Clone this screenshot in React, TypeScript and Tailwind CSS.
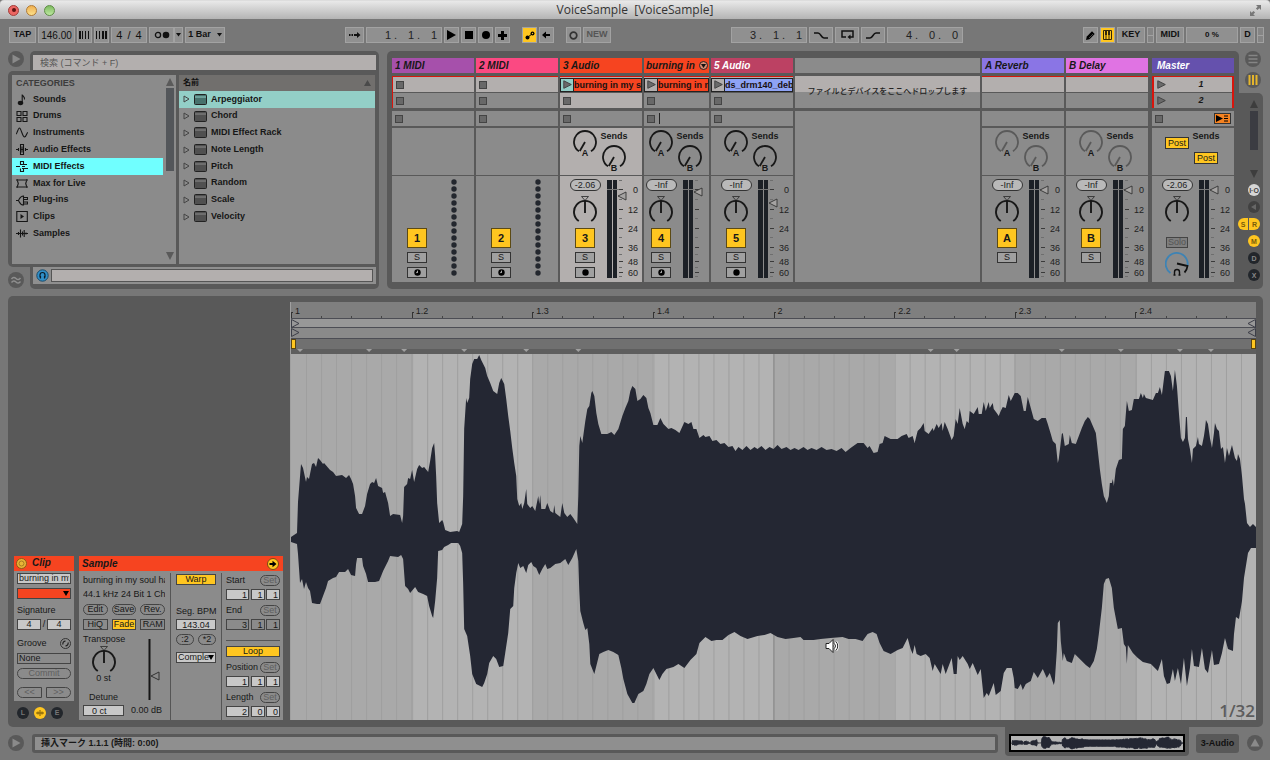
import React from "react";
import clsx from "clsx";

const waveTop =
  "291,536 297,532 298,501 301,463 303,467 306,481 307,476 309,478 312,463 314,462 316,466 318,457 320,459 323,463 324,462 330,469 333,471 336,475 342,474 346,477 349,474 351,478 353,483 355,495 356,507 359,513 362,513 365,505 367,493 370,483 372,481 374,482 376,477 378,485 382,487 383,492 385,491 388,502 390,515 393,513 400,514 402,522 403,515 404,486 407,483 408,477 410,478 412,469 414,481 417,468 419,464 422,467 424,466 428,471 430,460 432,447 434,442 435,455 436,475 437,502 439,522 442,519 443,521 445,529 450,531 457,530 459,531 462,523 463,495 464,428 466,397 467,402 469,397 470,378 472,363 474,358 477,358 479,354 481,359 485,367 487,375 490,382 493,390 497,393 499,382 501,377 504,383 506,398 508,415 510,430 512,447 514,462 516,475 517,498 519,505 521,502 522,508 524,502 526,488 527,503 530,507 532,505 535,510 538,495 539,503 540,494 541,508 545,508 547,502 550,510 553,512 554,504 555,512 560,516 562,502 564,512 567,516 570,513 573,517 577,523 578,495 579,445 580,435 582,442 585,420 587,408 589,405 591,392 592,390 594,395 596,412 598,423 601,433 607,433 611,431 614,434 618,428 622,415 625,407 628,400 630,390 632,385 635,388 637,400 640,398 643,394 646,397 648,407 650,412 653,424 657,424 660,417 663,423 668,428 671,427 675,429 679,432 684,421 688,423 691,421 693,428 696,428 699,437 703,434 705,436 709,435 712,440 716,439 720,443 724,442 728,446 732,445 735,450 738,446 742,449 746,445 750,449 754,446 757,448 761,445 765,449 769,446 773,448 777,444 781,448 786,446 790,449 794,447 798,449 803,446 807,449 811,447 816,449 821,446 826,449 831,448 836,450 841,447 845,451 850,447 857,442 863,442 867,447 869,445 873,452 877,451 879,443 882,442 884,435 890,438 897,438 901,435 906,433 908,437 912,435 914,442 917,430 920,427 923,422 924,430 928,433 932,427 933,430 936,423 938,427 941,422 942,430 944,421 947,428 951,439 953,435 955,418 957,423 959,407 962,423 964,428 966,420 968,422 969,410 973,413 977,406 978,413 981,413 983,401 985,410 988,401 989,407 992,402 993,408 996,412 998,415 1000,410 1002,406 1005,407 1008,394 1010,400 1014,392 1017,392 1020,395 1023,410 1025,410 1027,396 1030,407 1033,418 1037,420 1041,417 1045,417 1047,423 1050,433 1052,440 1055,443 1057,462 1058,458 1061,433 1062,432 1064,445 1068,443 1069,434 1071,442 1075,443 1078,435 1081,427 1084,420 1087,416 1089,418 1092,425 1095,432 1097,450 1099,468 1101,483 1103,495 1106,502 1108,495 1109,482 1111,482 1112,478 1113,485 1115,468 1118,459 1121,458 1122,428 1124,425 1126,400 1128,410 1131,409 1133,398 1138,398 1140,392 1142,397 1143,393 1145,397 1152,399 1155,392 1157,392 1159,386 1161,394 1163,378 1164,370 1168,370 1170,375 1172,390 1174,369 1176,385 1178,412 1180,437 1182,441 1184,437 1185,416 1186,416 1187,438 1189,448 1191,462 1192,448 1195,445 1197,436 1198,443 1201,445 1203,435 1204,428 1205,419 1207,423 1209,437 1211,447 1213,432 1214,422 1216,428 1218,430 1220,448 1222,446 1224,462 1226,447 1228,455 1231,444 1234,457 1236,460 1237,453 1239,458 1241,475 1243,498 1244,503 1246,522 1249,526 1252,523 1255,526";

const waveBottom =
  "291,541 297,543 298,553 300,582 302,578 304,588 306,581 308,587 310,590 312,602 317,603 320,603 323,595 326,587 328,580 333,577 336,576 339,571 345,571 348,568 351,574 355,575 356,563 357,557 362,557 363,565 366,573 368,581 375,581 379,580 383,570 388,560 390,555 398,556 401,554 403,558 405,585 408,588 410,592 415,586 418,591 423,593 427,595 429,605 432,615 433,617 435,600 437,577 438,550 442,549 444,546 448,544 451,542 458,542 460,545 462,552 463,583 464,628 467,635 470,655 472,673 476,683 482,686 484,682 487,673 489,662 493,655 496,658 499,666 503,665 505,652 508,632 510,608 513,605 514,587 516,572 518,562 520,567 523,565 526,572 528,564 531,561 533,565 536,567 539,574 542,568 545,563 547,568 550,567 555,563 560,562 565,558 568,564 572,557 576,548 578,560 579,590 580,610 583,622 585,629 587,627 589,643 590,663 594,673 596,665 599,653 603,651 608,649 613,651 618,654 621,667 623,678 627,693 632,702 634,702 638,693 643,690 646,683 649,673 653,667 656,673 659,679 662,673 666,668 673,666 678,663 684,667 690,659 696,653 699,642 705,636 711,640 716,639 722,639 728,634 734,631 740,635 747,638 757,635 764,634 770,632 777,636 785,638 793,637 800,636 803,639 813,639 820,638 830,637 842,636 848,638 855,638 862,640 867,633 872,631 876,633 879,642 883,650 890,653 897,649 902,647 907,637 910,648 912,653 914,644 916,653 920,655 925,653 929,657 932,670 934,663 940,673 942,663 945,673 948,665 951,657 953,673 956,673 957,655 959,659 962,655 967,663 969,668 972,662 977,674 980,668 983,697 986,692 988,695 993,682 995,694 1000,690 1003,672 1006,667 1011,667 1013,677 1014,687 1017,688 1020,683 1022,689 1025,683 1030,680 1033,671 1037,677 1042,668 1046,677 1049,672 1053,684 1054,680 1056,650 1057,622 1059,619 1060,640 1062,660 1063,652 1066,660 1071,662 1074,653 1080,659 1085,664 1089,667 1093,660 1096,648 1098,633 1101,607 1103,583 1105,578 1108,577 1111,587 1113,607 1117,628 1121,627 1123,643 1125,646 1126,663 1127,644 1132,652 1137,657 1142,661 1150,663 1157,670 1161,658 1163,675 1166,683 1169,682 1172,668 1174,680 1177,667 1180,683 1183,657 1186,685 1189,667 1191,648 1193,665 1198,666 1201,647 1204,668 1207,672 1211,649 1213,664 1218,663 1221,652 1224,637 1227,648 1232,650 1233,633 1235,616 1238,618 1241,600 1243,577 1247,552 1250,547 1255,547";

const wavePoints = `${waveTop} ${waveBottom.split(" ").reverse().join(" ")}`;

const categories = [
  "Sounds",
  "Drums",
  "Instruments",
  "Audio Effects",
  "MIDI Effects",
  "Max for Live",
  "Plug-ins",
  "Clips",
  "Samples",
];

const categoryIcons: Record<string, React.ReactNode> = {
  Sounds: (
    <>
      <ellipse cx="4.5" cy="10" rx="2.2" ry="1.6" fill="currentColor" />
      <path d="M6.2 10V1.5c.3 1.8 2.8 2 2.3 5" />
    </>
  ),
  Drums: <path d="M1 1.5h4v4H1zM7 1.5h4v4H7zM1 7.5h4v4H1zM7 7.5h4v4H7z" />,
  Instruments: <path d="M0 8c1 0 2-6 3.5-6S6.5 11 8.5 11 10.5 6.5 12 6.5" />,
  "Audio Effects": (
    <path d="M0 6.5h3M9 6.5h3M2.5 5v3M4.5 1.5h3v10h-3zM6 3.5v6M9.5 5v3M4 6.5h4" />
  ),
  "MIDI Effects": (
    <path d="M0 6.5h4M4.5 4.5v-3h3v3M4.5 8.5v3h3v-3M4 4.5h7M6 6.5h3M6 8.5h6" />
  ),
  "Max for Live": (
    <path d="M1 2v2M11 2v2M1 9v2M11 9v2M1 3h10M1 10h10M1.5 4l.8 2.5-.8 2.5M10.5 4l-.8 2.5.8 2.5" />
  ),
  "Plug-ins": (
    <path d="M0 6.5h2.5M7.5 2C4 2 3.5 5 2.5 6.5 3.5 8 4 11 7.5 11zM8 3.5h3.5v2H8M8 8h3.5v2H8" />
  ),
  Clips: (
    <>
      <path d="M.8 1.5h10.5v10H.8z" />
      <path d="M4.5 4v5l3.5-2.5z" fill="currentColor" stroke="none" />
    </>
  ),
  Samples: (
    <path d="M0 6.5h12M2.5 5v3M4.5 2.5v8M6.5 4.5v4M8.2 3v7M10 5.5v2" />
  ),
};

const devices = [
  "Arpeggiator",
  "Chord",
  "MIDI Effect Rack",
  "Note Length",
  "Pitch",
  "Random",
  "Scale",
  "Velocity",
];

const beats = ["1", "1.2", "1.3", "1.4", "2", "2.2", "2.3", "2.4"];
const warpMarks = [300, 369, 404, 464, 526, 578, 930, 956, 1061, 1120, 1179, 1210];

const scale = [
  { db: "0", y: 13 },
  { db: "12", y: 33 },
  { db: "24", y: 52 },
  { db: "36", y: 71 },
  { db: "48", y: 85 },
  { db: "60", y: 96 },
];

/* ---------- Top bar ---------- */

type BarButtonProps = {
  className?: string;
  label?: string;
  active?: boolean;
  children?: React.ReactNode;
};

const BarButton = ({ className, label, active, children }: BarButtonProps) => (
  <button
    type="button"
    aria-label={label}
    className={clsx(
      "flex h-4 shrink-0 items-center justify-center border border-[#a2a2a2]",
      active ? "bg-[#ffc620]" : "bg-[#909090]",
      className
    )}
  >
    {children}
  </button>
);

const Counter = ({ parts }: { parts: string[] }) => (
  <div className="flex h-4 w-[76px] items-center justify-end border border-[#a2a2a2] bg-[#909090] pr-[4px] text-[11px] font-normal text-[#222]">
    {parts.map((part, i) => (
      <span key={i} className={i < 2 ? "w-[23px]" : ""}>
        {i < 2 ? `${part} .` : part}
      </span>
    ))}
  </div>
);

const SplitBox = () => (
  <div className="flex h-4 w-[7px] flex-col border border-[#a2a2a2] bg-[#858585]">
    <div className="flex-1 border-b border-[#a2a2a2]" />
    <div className="flex-1" />
  </div>
);

const Bars = ({ widths }: { widths: number[] }) => (
  <svg width="11" height="8" fill="#111">
    {widths.map((w, i) => (
      <rect key={i} x={i * 3} y="0" width={w} height="8" />
    ))}
  </svg>
);

const TitleBar = () => (
  <header className="flex h-[19px] items-center rounded-t-[4px] border-t border-[#ddd] bg-linear-to-b from-[#e9e9e9] to-[#b4b4b4] px-2">
    <div className="flex flex-1 items-center gap-[7px]">
      <button type="button" aria-label="Close" className="flex size-[11px] items-center justify-center rounded-full border border-[#a3403c] bg-[#ec6662]">
        <span className="size-1 rounded-full bg-[#5c1512]" />
      </button>
      <button type="button" aria-label="Minimize" className="size-[11px] rounded-full border border-[#b17a33] bg-linear-to-b from-[#f0b050] to-[#fbe08a]" />
      <button type="button" aria-label="Zoom" className="size-[11px] rounded-full border border-[#5e8d45] bg-linear-to-b from-[#7fbc60] to-[#bce7a0]" />
    </div>
    <h1 className="whitespace-pre font-['Open_Sans',sans-serif] text-[12px] leading-4 text-[#333]">
      VoiceSample  [VoiceSample]
    </h1>
    <div className="flex flex-1 justify-end">
      <svg width="13" height="13" fill="#777">
        <path d="M7 1h5v5l-1.700-1.700-1.800 1.800-1.600-1.600 1.800-1.800zM1 7l1.700 1.700 1.800-1.800 1.600 1.600-1.800 1.800L6 12H1z" />
      </svg>
    </div>
  </header>
);

const Toolbar = () => (
  <div className="flex h-8 items-center justify-between pr-[6px] pl-[9px] text-[9px] font-bold text-[#111]">
    <div className="flex gap-[2px]">
      <BarButton className="w-[27px]">TAP</BarButton>
      <input
        aria-label="Tempo"
        defaultValue="146.00"
        className="h-4 w-[37px] border border-[#a2a2a2] bg-[#909090] text-center text-[10px] font-normal text-[#111]"
      />
      <BarButton className="w-[15px]" label="Nudge down">
        <Bars widths={[2, 1, 1, 1]} />
      </BarButton>
      <BarButton className="w-[15px]" label="Nudge up">
        <Bars widths={[1, 1, 2, 2]} />
      </BarButton>
      <BarButton className="w-[36px] gap-[5px] text-[11px] font-normal">
        <span>4</span>
        <span>/</span>
        <span>4</span>
      </BarButton>
      <div className="flex">
        <BarButton className="w-[25px]" label="Metronome">
          <svg width="16" height="8">
            <circle cx="4" cy="4" r="2.6" fill="none" stroke="#111" strokeWidth="1.3" />
            <circle cx="12" cy="4" r="3.3" fill="#111" />
          </svg>
        </BarButton>
        <BarButton className="w-[9px]" label="Metronome settings">
          <svg width="5" height="4">
            <path d="M0 0h5L2.500 3.500z" fill="#111" />
          </svg>
        </BarButton>
      </div>
      <BarButton className="w-[40px] gap-[6px] whitespace-nowrap">
        1 Bar
        <svg width="5" height="4">
          <path d="M0 0h5L2.500 3.500z" fill="#111" />
        </svg>
      </BarButton>
    </div>

    <div className="flex gap-3">
      <div className="flex gap-[2px]">
        <BarButton className="w-[19px]" label="Follow">
          <svg width="12" height="8" fill="#111">
            <path d="M0 3h1.500v2H0zM2.500 3H4v2H2.500zM5 3h3V1l3.500 3L8 7V5H5z" />
          </svg>
        </BarButton>
        <Counter parts={["1", "1", "1"]} />
        <BarButton className="w-[15px]" label="Play">
          <svg width="9" height="10">
            <path d="M0 0v10l9-5z" />
          </svg>
        </BarButton>
        <BarButton className="w-[15px]" label="Stop">
          <span className="size-2 bg-black" />
        </BarButton>
        <BarButton className="w-[15px]" label="Record">
          <span className="size-2 rounded-full bg-black" />
        </BarButton>
        <BarButton className="w-[15px]" label="Overdub">
          <svg width="9" height="9">
            <path d="M3 0h3v3h3v3H6v3H3V6H0V3h3z" />
          </svg>
        </BarButton>
      </div>
      <div className="flex gap-[2px]">
        <BarButton className="w-[15px]" label="Automation arm" active>
          <svg width="10" height="9">
            <circle cx="2.5" cy="6.5" r="2" />
            <circle cx="7.5" cy="2.5" r="2" />
            <path d="M2.500 6.500 7.500 2.500" stroke="#000" />
            <circle cx="7.5" cy="2.5" r=".7" fill="#ffc620" />
          </svg>
        </BarButton>
        <BarButton className="w-[15px]" label="Re-enable automation">
          <svg width="9" height="8">
            <path d="M0 4l4-3.500v2.500h4v2H4v2.500z" />
          </svg>
        </BarButton>
      </div>
      <div className="flex gap-[2px]">
        <BarButton className="w-[15px]" label="Session record">
          <svg width="9" height="9">
            <circle cx="4.5" cy="4.5" r="3.3" fill="none" stroke="#333" strokeWidth="1.7" />
          </svg>
        </BarButton>
        <BarButton className="w-[28px] text-[#555]">NEW</BarButton>
      </div>
    </div>

    <div className="flex gap-[2px]">
      <Counter parts={["3", "1", "1"]} />
      <BarButton className="w-6" label="Punch in">
        <svg width="14" height="7" fill="none" stroke="#111" strokeWidth="1.5">
          <path d="M0 1h4c3 0 3 5 6 5h4" />
        </svg>
      </BarButton>
      <BarButton className="w-6" label="Loop">
        <svg width="13" height="10" fill="none" stroke="#111" strokeWidth="1.5">
          <path d="M5 7H1V1h11v6H8" />
          <path d="M9.500 4.500v5L6.500 7z" fill="#111" stroke="none" />
        </svg>
      </BarButton>
      <BarButton className="w-6" label="Punch out">
        <svg width="14" height="7" fill="none" stroke="#111" strokeWidth="1.5">
          <path d="M0 6h4c3 0 3-5 6-5h4" />
        </svg>
      </BarButton>
      <Counter parts={["4", "0", "0"]} />
    </div>

    <div className="flex gap-[2px]">
      <BarButton className="w-[15px]" label="Draw mode">
        <svg width="9" height="9">
          <path d="M0 9l.8-3.500L6 .3 8.700 3 3.500 8.200z" />
          <path d="M3 7 7 3" stroke="#777" strokeWidth=".6" />
        </svg>
      </BarButton>
      <BarButton className="w-[15px]" label="Computer keyboard" active>
        <svg width="9" height="10" fill="none" stroke="#33270a">
          <path d="M.5.5h8v9h-8z" />
          <path d="M3 .5v9M6 .5v9" />
          <path d="M3 0v5M6 0v5" strokeWidth="2" />
        </svg>
      </BarButton>
      <BarButton className="w-[28px]">KEY</BarButton>
      <SplitBox />
      <BarButton className="w-[28px]">MIDI</BarButton>
      <div className="flex h-4 w-[52px] items-center justify-center border border-[#a2a2a2] bg-[#909090] text-[8px]">
        0 %
      </div>
      <BarButton className="w-[15px]">D</BarButton>
      <SplitBox />
    </div>
  </div>
);

/* ---------- Browser ---------- */

const RoundToggle = ({ label, children }: { label: string; children: React.ReactNode }) => (
  <button
    type="button"
    aria-label={label}
    className="flex size-4 shrink-0 items-center justify-center rounded-full bg-[#595959]"
  >
    <svg width="12" height="12" viewBox="0 0 12 12">
      {children}
    </svg>
  </button>
);

const Browser = () => (
  <aside className="flex w-[371px] shrink-0 flex-col">
    <div className="flex h-5">
      <RoundToggle label="Hide browser">
        <path d="M2.500 1.500v9l8-4.500z" fill="#8a8a8a" />
      </RoundToggle>
      <div className="ml-[6px] flex-1 rounded-t-[5px] bg-[#595959] px-[3px] pt-[4px]">
        <input
          type="text"
          aria-label="検索"
          placeholder="検索 (コマンド + F)"
          className="block h-[15px] w-full bg-[#b3afae] px-[7px] text-[9px] text-[#222] placeholder:text-[#555]"
        />
      </div>
    </div>
    <div className="flex flex-1 gap-[3px] rounded-l-[5px] bg-[#595959] p-[4px] pb-[3px]">
      <nav className="flex w-[164px] bg-[#8b8b8b]">
        <div className="flex-1">
          <h2 className="pl-1 text-[9px] leading-4 font-bold text-[#3c3c3c]">CATEGORIES</h2>
          <ul className="flex h-[151px] flex-col text-[9px] font-bold text-[#161616]">
            {categories.map((name) => (
              <li key={name} className="flex-1">
                <a
                  href={`#${name}`}
                  className={clsx(
                    "flex h-full items-center gap-[5px] pl-1",
                    name === "MIDI Effects" && "bg-[#70ffff]"
                  )}
                >
                  <svg
                    className="w-3"
                    height="13"
                    viewBox="0 0 12 13"
                    fill="none"
                    stroke="currentColor"
                    strokeWidth="1.1"
                  >
                    {categoryIcons[name]}
                  </svg>
                  {name}
                </a>
              </li>
            ))}
          </ul>
        </div>
        <div className="flex w-[13px] flex-col items-center pt-[3px] pb-[4px]">
          <svg width="8" height="8">
            <path d="M0 8h8L4 0z" fill="#5a5a5a" />
          </svg>
          <div className="mt-[2px] h-[83px] w-2 bg-[#53565a]" />
          <svg width="8" height="8" className="mt-auto">
            <path d="M0 0h8L4 8z" fill="#5a5a5a" />
          </svg>
        </div>
      </nav>
      <div className="flex-1 bg-[#8b8b8b]">
        <div className="flex h-4 items-center justify-between bg-[#716f6d] px-1 text-[8px] font-bold text-[#111]">
          名前
          <svg width="7" height="6">
            <path d="M0 6h7L3.500 0z" fill="#4a4a4a" />
          </svg>
        </div>
        <ul className="flex h-[134px] flex-col text-[9px] font-bold text-[#161616]">
          {devices.map((name, i) => (
            <li
              key={name}
              className={clsx("flex flex-1 items-center pl-1", i === 0 && "bg-[#93cfc7]")}
            >
              <svg width="7" height="8" fill="none" stroke="#444" className="mr-[4px]">
                <path d="M1 1v6L6 4z" />
              </svg>
              <svg width="13" height="11" className="mr-[4px]">
                <rect x=".5" y=".5" width="12" height="10" rx="1" fill={i ? "#505050" : "#47716c"} stroke="#222" />
                <path d="M1 3h11" stroke={i ? "#8b8b8b" : "#93cfc7"} />
              </svg>
              {name}
            </li>
          ))}
        </ul>
      </div>
    </div>
    <div className="flex h-[22px] items-end">
      <div className="flex h-full w-[22px] items-end pb-[1px]">
        <RoundToggle label="Groove pool">
          <path
            d="M1.500 5c1.500-2 3-2 4.500-.5S9 6 10.500 4M1.500 8.500c1.500-2 3-2 4.500-.5s3 1.500 4.500-.5"
            fill="none"
            stroke="#8f8f8f"
            strokeWidth="1.4"
          />
        </RoundToggle>
      </div>
      <div className="h-full flex-1 rounded-b-[5px] bg-[#595959] px-[3px]">
        <div className="flex h-[17px] items-center gap-[2px] bg-[#8f8f8f] px-[3px]">
          <svg width="13" height="13">
            <circle cx="6.5" cy="6.5" r="5.7" fill="#2f8fc9" stroke="#1b4a68" />
            <path d="M4 8.500V6a2.500 2.500 0 0 1 5 0v2.500M4.500 7v2.500M8.500 7v2.500" fill="none" stroke="#0b1c28" strokeWidth="1.2" />
          </svg>
          <div className="h-[13px] flex-1 border border-[#555] bg-[#b3afae]" />
        </div>
      </div>
    </div>
  </aside>
);

/* ---------- Session ---------- */

type KnobProps = {
  label: string;
  letter?: string;
  pan?: boolean;
  color?: string;
};

const Knob = ({ label, letter, pan, color = "#181818" }: KnobProps) => (
  <label className="relative block w-6">
    <svg width="24" height={pan ? 30 : 28} fill="none" stroke={color}>
      {pan ? (
        <>
          <path d="M8.500 1.500h7L12 5.500z" stroke="#333" strokeWidth=".9" />
          <path d="M5.800 26a11 11 0 1 1 12.400 0" strokeWidth="1.9" />
          <path d="M12 6v12" strokeWidth="1.9" />
        </>
      ) : (
        <>
          <path d="M6 21.200a11 11 0 1 1 12 0" strokeWidth="1.8" />
          <path d="M12 12 6.800 21" strokeWidth="1.8" />
          <text x="12" y="26" textAnchor="middle" fontSize="9" fontWeight="700" fill="#181818" stroke="none">
            {letter}
          </text>
        </>
      )}
    </svg>
    <input type="range" aria-label={label} className="absolute inset-0 size-full opacity-0" />
  </label>
);

const Fader = ({ y, narrow }: { y: number; narrow?: boolean }) => (
  <label className="relative block">
    <svg width={narrow ? 24 : 34} height="106">
      <rect x="0" y="4" width="5" height="98" fill="#1c2026" />
      <rect x="6" y="4" width="4" height="98" fill="#1c2026" />
      <path d="M0 13.500h14" stroke="#777" />
      {[4, 23, 42, 61, 78, 91, 100].map((t) => (
        <path key={t} d={`M12 ${t + 0.5}h3`} stroke="#6e6e6e" />
      ))}
      {scale.map(({ db, y: ty }) => (
        <React.Fragment key={db}>
          <path d={`M12 ${ty + 0.5}h4`} stroke="#3a3a3a" />
          {!narrow && (
            <text x="31" y={ty + 4} textAnchor="end" fontSize="9" fill="#222">
              {db}
            </text>
          )}
        </React.Fragment>
      ))}
      <path d={`M11 ${y}l8-4v8z`} fill="#a5a3a2" stroke="#333" strokeWidth=".9" />
    </svg>
    <input type="range" aria-label="Volume" className="absolute inset-0 size-full opacity-0" />
  </label>
);

const StopSquare = () => (
  <button type="button" aria-label="Stop clip" className="size-2 border border-[#444] bg-[#686868]" />
);

const PlayTri = () => (
  <svg width="9" height="9">
    <path d="M.8.8v7.500l7.500-3.750z" fill="#6a6a6a" stroke="#444" />
  </svg>
);

type TrackProps = {
  name: string;
  headClass: string;
  kind: "midi" | "audio" | "return" | "master";
  number?: string;
  clip?: { name: string; className: string; playing?: boolean };
  volume?: string;
  fader?: number;
  selected?: boolean;
  narrow?: boolean;
  arm?: "audio" | "midi";
  first?: boolean;
};

const Track = ({
  name,
  headClass,
  kind,
  number,
  clip,
  volume,
  fader = 14,
  selected,
  narrow,
  arm,
  first,
}: TrackProps) => {
  const body = selected ? "bg-[#b3afae]" : "bg-[#8b8b8b]";
  const master = kind === "master";
  const hasSlots = kind === "midi" || kind === "audio";

  return (
    <section
      className={clsx(
        "flex shrink-0 flex-col overflow-hidden",
        narrow ? "w-[65px]" : "w-[82px]",
        master && "ml-[2px]"
      )}
    >
      <header
        className={clsx(
          "flex h-[15px] shrink-0 items-center justify-between pr-px text-[10px] leading-none font-bold whitespace-nowrap italic",
          master ? "pl-[5px]" : narrow ? "pl-[2px]" : "pl-[3px]",
          headClass
        )}
      >
        {name}
        {narrow && (
          <svg width="9" height="9">
            <circle cx="4.5" cy="4.5" r="4" fill="#d98a70" stroke="#222" />
            <path d="M2 3h5L4.500 7z" fill="#111" />
          </svg>
        )}
      </header>

      <div
        className={clsx(
          "mt-[3px] flex h-8 shrink-0 flex-col gap-px border-t border-[#d8150c]",
          first && "border-l",
          master && "border-x-2"
        )}
      >
        <div className="flex h-[15px] items-center bg-[#b3afae] pl-[3px]">
          {clip ? (
            <div className="-ml-[3px] flex h-[14px] min-w-0 flex-1 border border-[#222]">
              <button
                type="button"
                aria-label={`Launch ${clip.name}`}
                className={clsx(
                  "flex w-3 shrink-0 items-center justify-center",
                  clip.playing ? "bg-[#93cfc7]" : "bg-[#b3afae]"
                )}
              >
                <PlayTri />
              </button>
              <span
                className={clsx(
                  "flex-1 overflow-hidden border-l border-[#222] text-[9px] leading-3 font-bold whitespace-nowrap text-[#1a1010]",
                  clip.className
                )}
              >
                {clip.name}
              </span>
            </div>
          ) : (
            hasSlots && <StopSquare />
          )}
          {master && (
            <>
              <PlayTri />
              <span className="flex-1 pl-1 text-center text-[9px] font-bold italic">1</span>
            </>
          )}
        </div>
        <div className={clsx("flex h-[15px] items-center pl-[3px]", body)}>
          {hasSlots && <StopSquare />}
          {master && (
            <>
              <PlayTri />
              <span className="flex-1 pl-1 text-center text-[9px] font-bold italic">2</span>
            </>
          )}
        </div>
      </div>

      <div className="mt-[3px] flex h-[15px] shrink-0 items-center gap-1 bg-[#8b8b8b] px-[3px]">
        {(hasSlots || master) && <StopSquare />}
        {narrow && <span className="h-[11px] w-px bg-[#222]" />}
        {master && (
          <button
            type="button"
            aria-label="Back to arrangement"
            className="ml-auto flex h-[11px] w-[17px] items-center justify-center border border-[#333] bg-[#f58220]"
          >
            <svg width="13" height="7">
              <path d="M0 0v7l7-3.500z" />
              <path d="M8 1h4M8 3.500h4M8 6h4" stroke="#000" />
            </svg>
          </button>
        )}
      </div>

      <div className={clsx("mt-[2px] flex h-[47px] shrink-0 items-start gap-[5px] pt-[2px]", body, narrow ? "pl-[5px]" : "pl-[13px]")}>
        {(kind === "audio" || kind === "return") && (
          <>
            <Knob label={`${name} send A`} letter="A" color={kind === "return" ? "#5a5a5a" : "#181818"} />
            <div className="flex w-6 flex-col items-center">
              <span className="h-[15px] text-[9px] leading-[13px] font-bold">Sends</span>
              <Knob label={`${name} send B`} letter="B" color={kind === "return" ? "#5a5a5a" : "#181818"} />
            </div>
          </>
        )}
        {master && (
          <>
            <button type="button" className="mt-[7px] h-[12px] w-[24px] border border-[#333] bg-[#ffc620] text-[9px] leading-[10px]">
              Post
            </button>
            <div className="flex w-6 flex-col items-center">
              <span className="h-[22px] text-[9px] leading-[13px] font-bold">Sends</span>
              <button type="button" className="h-[12px] w-6 border border-[#333] bg-[#ffc620] text-[9px] leading-[10px]">
                Post
              </button>
            </div>
          </>
        )}
      </div>

      <div className={clsx("mt-px flex h-[106px] shrink-0", body, narrow ? "pl-px" : "pl-[9px]")}>
        <div className="flex w-8 flex-col items-center pt-[3px]">
          {kind === "midi" ? (
            <div className="h-[49px]" />
          ) : (
            <>
              <input
                aria-label={`${name} volume`}
                defaultValue={volume}
                className="h-3 w-[31px] rounded-full border border-[#333] bg-[#b9b9b9] text-center text-[9px] leading-none text-[#222]"
              />
              <div className="mt-[4px] mb-[3px]">
                <Knob label={`${name} pan`} pan />
              </div>
            </>
          )}
          {master ? (
            <>
              <button type="button" className="mt-[9px] h-[11px] w-[22px] border border-[#444] bg-[#7e7e7e] text-[9px] leading-[9px] text-[#555]">
                Solo
              </button>
              <label className="relative mt-[3px] block">
                <svg width="24" height="27" fill="none">
                  <path d="M5.500 22A11 11 0 1 1 22.500 15" stroke="#3d83b5" strokeWidth="1.8" />
                  <path d="M12 12.500l10.500 2.500q-.5 4-3 6.500" stroke="#111" strokeWidth="1.8" />
                  <path d="M9.500 24v-3a2.500 2.500 0 0 1 5 0v3M8.500 24h2M13.500 24h2" stroke="#111" strokeWidth="1.4" />
                </svg>
                <input type="range" aria-label="Cue volume" className="absolute inset-0 size-full opacity-0" />
              </label>
            </>
          ) : (
            <>
              <button type="button" className="size-5 border border-[#5c4a14] bg-[#ffc620] text-[11px] leading-none font-bold">
                {number}
              </button>
              <button type="button" className="mt-1 h-[11px] w-5 border border-[#333] bg-[#a0a0a0] text-[9px] leading-[9px]">
                S
              </button>
              {arm && (
                <button
                  type="button"
                  aria-label={`Arm ${name}`}
                  className="mt-1 flex h-[11px] w-5 items-center justify-center border border-[#333] bg-[#a0a0a0]"
                >
                  <svg width="7" height="7">
                    <circle cx="3.5" cy="3.5" r="3.2" />
                    {arm === "midi" && <path d="M1.800 4.200 4 1v2.800z" fill="#bbb" />}
                  </svg>
                </button>
              )}
            </>
          )}
        </div>
        {kind === "midi" ? (
          <svg width="6" height="106" className="ml-[18px]" fill="#23272e">
            {Array.from({ length: 14 }, (_, i) => (
              <circle key={i} cx="3" cy={6 + i * 7} r="2.7" />
            ))}
          </svg>
        ) : (
          <div className="ml-[6px]">
            <Fader y={fader} narrow={narrow} />
          </div>
        )}
      </div>
    </section>
  );
};

const DropArea = () => (
  <section className="flex min-w-0 flex-1 flex-col">
    <div className="h-[15px] bg-[#8b8b8b]" />
    <div className="mt-[3px] flex h-8 items-center justify-center overflow-hidden bg-linear-to-b from-[#b3afae] from-50% to-[#8b8b8b] to-50% text-[8px] font-medium whitespace-nowrap text-[#222]">
      ファイルとデバイスをここへドロップします
    </div>
    <div className="mt-[3px] flex-1 bg-[#8b8b8b]" />
  </section>
);

const StripDot = ({ className, children }: { className: string; children?: React.ReactNode }) => (
  <button
    type="button"
    className={clsx("flex h-3 items-center justify-center text-[7px] leading-none font-bold", className)}
  >
    {children}
  </button>
);

const SideStrip = () => (
  <div className="flex w-6 shrink-0 flex-col">
    <div className="flex h-[42px] flex-col items-end gap-[5px] pr-[2px]">
      <RoundToggle label="Arrangement view">
        <path d="M1.500 2.500h9M1.500 6h9M1.500 9.500h9" stroke="#858585" strokeWidth="1.3" />
      </RoundToggle>
      <RoundToggle label="Session view">
        <path d="M2.500 1v10M6 1v10M9.500 1v10" stroke="#e5b62c" strokeWidth="2" />
      </RoundToggle>
    </div>
    <div className="flex flex-1 flex-col items-end rounded-tr-[5px] rounded-br-[5px] bg-[#595959] pt-[7px] pr-[3px]">
      <svg width="8" height="8" className="mr-[2px]">
        <path d="M0 8h8L4 0z" fill="#3d3d3d" />
      </svg>
      <div className="mt-[3px] mr-[2px] h-[39px] w-2 bg-[#3b3c42]" />
      <svg width="8" height="8" className="mt-5 mr-[2px]">
        <path d="M0 0h8L4 8z" fill="#3d3d3d" />
      </svg>
      <div className="mt-[6px] flex flex-col items-end gap-[5px]">
        <StripDot className="w-3 rounded-full bg-[#d6d6d6] text-[#444]">I·O</StripDot>
        <StripDot className="w-3 rounded-full bg-[#414141] text-[#666]">
          <svg width="6" height="6">
            <path d="M0 3l5-3v6z" fill="#666" />
          </svg>
        </StripDot>
        <div className="flex w-3 justify-end gap-px">
          <StripDot className="w-[10px] shrink-0 rounded-l-full bg-[#ffc620] text-[#7a5c0a]">S</StripDot>
          <StripDot className="w-[11px] shrink-0 rounded-r-full bg-[#ffc620] text-[#7a5c0a]">R</StripDot>
        </div>
        <StripDot className="w-3 rounded-full bg-[#ffc620] text-[#7a5c0a]">M</StripDot>
        <StripDot className="w-3 rounded-full bg-[#22262b] text-[#888]">D</StripDot>
        <StripDot className="w-3 rounded-full bg-[#22262b] text-[#888]">X</StripDot>
      </div>
    </div>
  </div>
);

const Session = () => (
  <main className="flex min-w-0 flex-1">
    <div className="flex min-w-0 flex-1 gap-[2px] rounded-l-[5px] rounded-tr-[5px] bg-[#595959] px-[5px] py-[7px] text-[#181818]">
      <Track name="1 MIDI" headClass="bg-[#a650ab]" kind="midi" number="1" arm="midi" first />
      <Track name="2 MIDI" headClass="bg-[#fb4982]" kind="midi" number="2" arm="midi" />
      <Track
        name="3 Audio"
        headClass="bg-[#f64420]"
        kind="audio"
        number="3"
        arm="audio"
        selected
        volume="-2.06"
        fader={20}
        clip={{ name: "burning in my so", className: "bg-[#f64420]", playing: true }}
      />
      <Track
        name="burning in"
        headClass="bg-[#f64420]"
        kind="audio"
        number="4"
        arm="midi"
        narrow
        volume="-Inf"
        fader={16}
        clip={{ name: "burning in m", className: "bg-[#f64420]" }}
      />
      <Track
        name="5 Audio"
        headClass="bg-[#bc4163] text-white"
        kind="audio"
        number="5"
        arm="audio"
        volume="-Inf"
        fader={27}
        clip={{ name: "ds_drm140_deb", className: "bg-[#8ea3f5]" }}
      />
      <DropArea />
      <Track name="A Reverb" headClass="bg-[#8a75e5]" kind="return" number="A" volume="-Inf" />
      <Track name="B Delay" headClass="bg-[#e073e3]" kind="return" number="B" volume="-Inf" />
      <Track name="Master" headClass="bg-[#6551ad] text-white" kind="master" volume="-2.06" />
    </div>
    <SideStrip />
  </main>
);

/* ---------- Clip view ---------- */

const field = "h-[11px] border border-[#444] text-[9px] leading-[9px] text-[#181818]";
const pill =
  "flex h-[11px] items-center justify-center border border-[#444] text-[9px] leading-none";

const ClipBox = () => (
  <div className="flex w-[60px] flex-col">
    <div className="flex h-[15px] items-center gap-[5px] bg-[#f64420] pl-[2px] text-[10px] leading-none font-bold italic">
      <svg width="11" height="11">
        <circle cx="5.5" cy="5.5" r="5" fill="#e9b437" stroke="#8e5a16" />
        <circle cx="5.5" cy="5.5" r="2.5" fill="none" stroke="#a77a20" />
      </svg>
      Clip
    </div>
    <div className="flex flex-col bg-[#8b8b8b] px-[3px] pt-[2px] pb-[3px]">
      <input aria-label="Clip name" defaultValue="burning in my" className={`${field} w-full bg-[#c8c8c8] px-px`} />
      <button
        type="button"
        aria-label="Clip color"
        className="mt-[4px] flex h-[11px] items-center justify-end border border-[#444] bg-[#f64420] pr-px"
      >
        <svg width="6" height="5">
          <path d="M0 0h6L3 5z" />
        </svg>
      </button>
      <span className="mt-[4px] h-[15px] leading-[14px]">Signature</span>
      <div className="flex items-center justify-between">
        <input aria-label="Signature numerator" defaultValue="4" className={`${field} w-6 bg-[#c8c8c8] text-center`} />
        /
        <input aria-label="Signature denominator" defaultValue="4" className={`${field} w-6 bg-[#c8c8c8] text-center`} />
      </div>
      <div className="mt-[5px] mb-[2px] flex h-[15px] items-center justify-between">
        Groove
        <button type="button" aria-label="Hot-swap groove" className="flex size-[11px] items-center justify-center rounded-full border border-[#333]">
          <svg width="7" height="7" fill="none" stroke="#222" strokeWidth="1.2">
            <path d="M1 4.500a2.500 2.500 0 0 1 2.500-3.300M6 2.500A2.500 2.500 0 0 1 3.500 5.800" />
          </svg>
        </button>
      </div>
      <select aria-label="Groove" className={`${field} appearance-none bg-[#8b8b8b] pl-px`}>
        <option>None</option>
      </select>
      <button type="button" className={`${pill} mt-[4px] rounded-full text-[#5f5f5f]`}>
        Commit
      </button>
      <div className="mt-[8px] flex gap-[4px] text-[#5f5f5f]">
        <button type="button" className={`${pill} flex-1 rounded-l-full`}>
          &lt;&lt;
        </button>
        <button type="button" className={`${pill} flex-1 rounded-r-full`}>
          &gt;&gt;
        </button>
      </div>
    </div>
    <div className="flex h-[19px] items-center gap-[5px] pt-[4px] pl-[3px]">
      <StripDot className="w-3 rounded-full bg-[#22262b] text-[#777]">L</StripDot>
      <button type="button" aria-label="Sample box" className="flex size-3 items-center justify-center rounded-full bg-[#ffc620]">
        <svg width="8" height="6" stroke="#7a5c0a">
          <path d="M0 3h8M2 1.500v3M4 0v6M6 1.500v3" />
        </svg>
      </button>
      <StripDot className="w-3 rounded-full bg-[#22262b] text-[#777]">E</StripDot>
    </div>
  </div>
);

type TimeFieldProps = { label: string; values: string[]; muted?: boolean };

const TimeField = ({ label, values, muted }: TimeFieldProps) => (
  <div>
    <div className="flex h-[15px] items-center justify-between">
      {label}
      <button type="button" className={`${pill} w-5 rounded-full text-[#5f5f5f]`}>
        Set
      </button>
    </div>
    <div className="mt-px mb-[3px] grid grid-cols-[23px_14px_14px] justify-between">
      {values.map((value, i) => (
        <input
          key={i}
          aria-label={`${label} ${["bar", "beat", "sixteenth"][i]}`}
          defaultValue={value}
          className={clsx(field, "w-full pr-px text-right", muted ? "bg-[#8b8b8b]" : "bg-[#c8c8c8]")}
        />
      ))}
    </div>
  </div>
);

const SampleBox = () => (
  <div className="flex w-[204px] flex-col bg-[#8b8b8b]">
    <div className="flex h-[15px] items-center justify-between bg-[#f64420] pr-1 pl-[3px] text-[10px] leading-none font-bold italic">
      Sample
      <button type="button" aria-label="Open in editor">
        <svg width="12" height="12" className="block">
          <circle cx="6" cy="6" r="5.5" fill="#ffc620" stroke="#7a4a10" />
          <path d="M2.500 5h3V2.800L9.500 6l-4 3.200V7h-3z" />
        </svg>
      </button>
    </div>
    <div className="flex flex-1 pt-[2px]">
      <div className="flex w-[92px] flex-col border-r border-[#555] pr-[5px] pl-[4px]">
        <span className="h-[14px] overflow-hidden leading-[14px] whitespace-nowrap">burning in my soul ha</span>
        <span className="h-[14px] overflow-hidden leading-[14px] whitespace-nowrap">44.1 kHz 24 Bit 1 Ch</span>
        <div className="mt-[3px] grid grid-cols-3 gap-[4px]">
          {["Edit", "Save", "Rev."].map((name) => (
            <button key={name} type="button" className={`${pill} rounded-full`}>
              {name}
            </button>
          ))}
          {["HiQ", "Fade", "RAM"].map((name) => (
            <button key={name} type="button" className={clsx(pill, name === "Fade" && "bg-[#ffc620]")}>
              {name}
            </button>
          ))}
        </div>
        <div className="mt-[3px] flex justify-between">
          <div className="flex flex-col">
            <span className="h-[12px] leading-[12px]">Transpose</span>
            <div className="flex w-[41px] flex-col items-center">
              <Knob label="Transpose" pan />
              <span className="-mt-[2px] leading-[10px]">0 st</span>
            </div>
            <span className="mt-[8px] w-[41px] text-center leading-[12px]">Detune</span>
          </div>
          <label className="relative block">
            <svg width="18" height="70">
              <path d="M2.500 6v61" stroke="#151515" strokeWidth="2" />
              <path d="M4 43l8-4v8z" fill="#8b8b8b" stroke="#333" />
            </svg>
            <input type="range" aria-label="Gain" className="absolute inset-0 size-full opacity-0" />
          </label>
        </div>
        <div className="mt-px flex items-center justify-between">
          <input aria-label="Detune" defaultValue="0 ct" className={`${field} w-[41px] bg-[#c8c8c8] pl-2`} />
          <span className="pr-[3px] whitespace-nowrap">0.00 dB</span>
        </div>
      </div>

      <div className="flex w-[51px] flex-col border-r border-[#555] px-[5px]">
        <button type="button" className={`${pill} mt-px bg-[#ffc620]`}>
          Warp
        </button>
        <label className="mt-[19px] flex flex-col whitespace-nowrap">
          <span className="h-[15px] leading-[14px]">Seg. BPM</span>
          <input defaultValue="143.04" className={`${field} w-full bg-[#c8c8c8] text-center`} />
        </label>
        <div className="mt-[4px] flex gap-[4px]">
          <button type="button" className={`${pill} flex-1 rounded-full`}>:2</button>
          <button type="button" className={`${pill} flex-1 rounded-full`}>*2</button>
        </div>
        <label className="relative mt-[7px] block">
          <select aria-label="Warp mode" className={`${field} block w-full appearance-none bg-[#c8c8c8] pl-px`}>
            <option>Comple</option>
          </select>
          <svg width="6" height="5" className="pointer-events-none absolute top-[3px] right-[2px]">
            <path d="M0 0h6L3 5z" />
          </svg>
        </label>
      </div>

      <div className="flex flex-1 flex-col pr-[3px] pl-[4px]">
        <TimeField label="Start" values={["1", "1", "1"]} />
        <TimeField label="End" values={["3", "1", "1"]} muted />
        <div className="mt-[7px] mb-[5px] h-px bg-[#555]" />
        <button type="button" className={`${pill} mb-[3px] bg-[#ffc620]`}>
          Loop
        </button>
        <TimeField label="Position" values={["1", "1", "1"]} />
        <TimeField label="Length" values={["2", "0", "0"]} />
      </div>
    </div>
  </div>
);

const MarkerRow = ({ className }: { className: string }) => (
  <div className={clsx("flex justify-between border-b border-[#4c4d54]", className)}>
    <svg width="9" height="9" fill="none" stroke="#3c3e48">
      <path d="M.5.5 8 4.500.5 8.500z" />
    </svg>
    <svg width="9" height="9" fill="none" stroke="#3c3e48">
      <path d="M8.500.5 1 4.500l7.500 4z" />
    </svg>
  </div>
);

const WaveDisplay = () => (
  <div className="relative flex min-w-0 flex-1 flex-col border-l border-[#a0a0a0] bg-[#7f7f7f]">
    <div className="grid h-[17px] grid-cols-8 border-b border-[#4c4d54] text-[9px] text-[#1c1c1c]">
      {beats.map((beat) => (
        <div key={beat} className="flex flex-col justify-end">
          <span className="h-[10px] pl-[4px] leading-[10px]">{beat}</span>
          <div className="grid h-[2px] grid-cols-4">
            {[0, 1, 2, 3].map((n) => (
              <div key={n} className="relative border-l border-[#444]">
                {n === 0 && <span className="absolute -top-1 -left-px h-[6px] w-[2px] border-t border-l border-[#333]" />}
              </div>
            ))}
          </div>
        </div>
      ))}
    </div>
    <MarkerRow className="h-[9px] bg-[#989898]" />
    <MarkerRow className="h-[11px] bg-[#8a8a8a]" />
    <div className="flex h-[10px] justify-between bg-[#707070]">
      <span className="w-[5px] border border-[#5a4510] bg-[#ffc620]" />
      <span className="w-[5px] border border-[#5a4510] bg-[#ffc620]" />
    </div>
    <svg className="h-[5px] w-full bg-[#5e5e5e]" viewBox="291 0 964 5" preserveAspectRatio="none" fill="#a0a0a0">
      {warpMarks.map((x) => (
        <path key={x} d={`M${x - 3} 0h6l-3 3z`} />
      ))}
    </svg>
    <svg className="min-h-[300px] w-full flex-1 basis-0" viewBox="291 353 964 366" preserveAspectRatio="none">
      {beats.map((beat, i) => (
        <rect key={beat} x={291 + i * 120.5} y="353" width="120.5" height="366" fill={i % 2 ? "#b3b3b3" : "#a9a9a9"} />
      ))}
      {Array.from({ length: 63 }, (_, i) => (
        <path
          key={i}
          d={`M${Math.round(291 + (i + 1) * 15.0625) + 0.5} 353v366`}
          stroke={i === 31 ? "#888" : "#9f9f9f"}
        />
      ))}
      <polygon points={wavePoints} fill="#242733" />
    </svg>
    <span className="absolute right-px bottom-0 font-['Open_Sans',sans-serif] text-[17px] leading-[18px] font-semibold text-[#5c5c5c]">
      1/32
    </span>
    <svg width="15" height="14" className="absolute bottom-[67px] left-[534px]" fill="none">
      <path d="M1 4.500h3l4-4v13l-4-4H1z" fill="#fff" stroke="#222" />
      <path d="M9.500 4.500q2 2.500 0 5M11 2.500q3.500 4.500 0 9" stroke="#fff" strokeWidth="2.4" />
      <path d="M9.500 4.500q2 2.500 0 5M11 2.500q3.500 4.500 0 9" stroke="#222" />
    </svg>
  </div>
);

const ClipView = () => (
  <section className="mr-[7px] ml-[8px] flex flex-1 gap-[6px] rounded-[5px] bg-[#595959] pt-[6px] pr-[7px] pb-[7px] pl-[6px]">
    <div className="flex w-[270px] shrink-0 items-end gap-[5px] text-[9px] text-[#181818]">
      <ClipBox />
      <SampleBox />
    </div>
    <WaveDisplay />
  </section>
);

const StatusBar = () => (
  <footer className="flex h-[33px] items-start pr-[7px] pl-[8px]">
    <div className="pt-[8px]">
      <RoundToggle label="Info view">
        <path d="M2.500 1.500v9l8-4.500z" fill="#8a8a8a" />
      </RoundToggle>
    </div>
    <div className="mt-[7px] ml-[8px] h-[19px] flex-1 rounded-[3px] border-[3px] border-[#595959] bg-[#8f8f8f] pl-[6px] text-[9px] leading-[13px] font-bold text-[#181818]">
      挿入マーク 1.1.1 (時間: 0:00)
    </div>
    <div className="ml-[7px] h-[29px] w-[184px] rounded-b-[4px] bg-[#595959] px-[4px] pt-[7px]">
      <svg
        className="h-[18px] w-full border-2 border-black bg-[#b5b5b5]"
        viewBox="291 345 964 380"
        preserveAspectRatio="none"
      >
        <polygon points={wavePoints} fill="#242733" stroke="#242733" strokeWidth="6" />
      </svg>
    </div>
    <button type="button" className="mt-[7px] ml-[7px] h-[19px] w-[43px] rounded-[3px] bg-[#595959] text-[9px] font-bold text-[#111]">
      3-Audio
    </button>
    <div className="pt-[8px] pl-[8px]">
      <RoundToggle label="Show detail">
        <path d="M1.500 9.500h9L6 1.500z" fill="#8a8a8a" />
      </RoundToggle>
    </div>
  </footer>
);

const App = () => (
  <div className="flex min-h-screen min-w-[1100px] flex-col bg-[#777] [font-family:'Liberation_Sans','Noto_Sans_CJK_JP',sans-serif]">
    <TitleBar />
    <Toolbar />
    <div className="mb-[7px] flex h-[238px] gap-2 pr-[7px] pl-[8px]">
      <Browser />
      <Session />
    </div>
    <ClipView />
    <StatusBar />
  </div>
);

export default App;
